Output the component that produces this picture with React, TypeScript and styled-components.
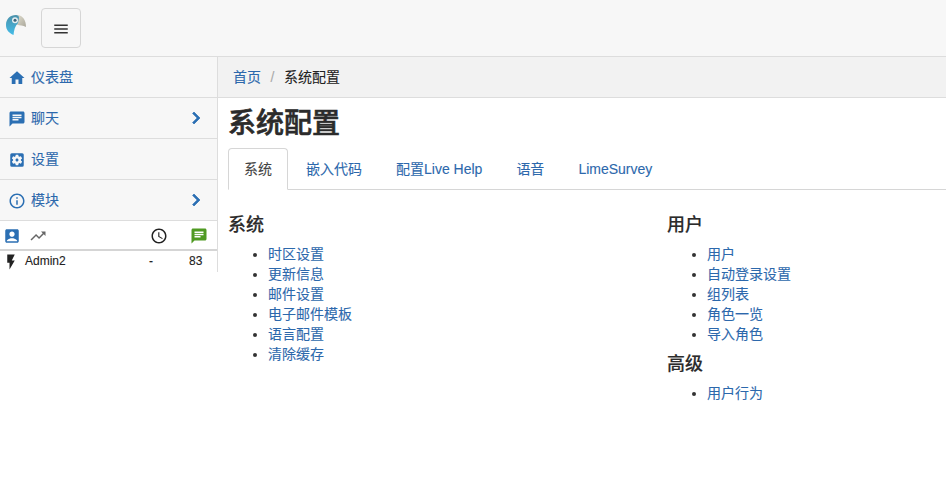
import React from "react";
import styled, { createGlobalStyle } from "styled-components";
import {
  MdAccessTime,
  MdAccountBox,
  MdChat,
  MdChevronRight,
  MdFlashOn,
  MdHome,
  MdInfoOutline,
  MdMenu,
  MdSettingsApplications,
  MdTrendingUp,
} from "react-icons/md";

const ICON = "#2b6fb3";
const LINE = "#dddddd";

const GlobalStyle = createGlobalStyle`
  *, *::before, *::after { box-sizing: border-box; }
  body {
    margin: 0;
    background: #fff;
    color: #333;
    font-family: "Liberation Sans", "Noto Sans CJK SC", sans-serif;
    font-size: 14px;
    line-height: 20px;
    -webkit-text-stroke: 0.1px;
  }
  a { color: #2c68ac; text-decoration: none; }
`;

const Page = styled.div`
  width: 100%;
  min-height: 496px;
  overflow: hidden;
`;

const TopBar = styled.header`
  display: flex;
  align-items: flex-start;
  height: 57px;
  padding: 8px 0 0 4px;
  background: #f7f7f7;
  border-bottom: 1px solid ${LINE};
`;

const Logo = styled.svg`
  width: 24px;
  height: 22px;
  margin: 6px 13px 0 0;
`;

const MenuButton = styled.button`
  display: flex;
  align-items: center;
  justify-content: center;
  width: 40px;
  height: 40px;
  padding: 2px 0 0;
  border: 1px solid #d6d6d6;
  border-radius: 4px;
  background: transparent;
  color: #333;
`;

const Columns = styled.div`
  display: flex;
  align-items: flex-start;
`;

const Sidebar = styled.aside`
  flex: none;
  width: 218px;
  height: 215px;
  border-right: 1px solid ${LINE};
`;

const NavItem = styled.a`
  display: flex;
  align-items: center;
  height: 41px;
  padding: 0 9px 0 8px;
  background: #f7f7f7;
  border-bottom: 1px solid ${LINE};
`;

const NavIcon = styled.span`
  display: flex;
  width: 18px;
  margin: 2px 5px 0 0;
  color: ${ICON};
`;

const NavLabel = styled.span`
  flex: 1;
`;

const Arrow = styled(MdChevronRight)`
  flex: none;
  color: ${ICON};
  path:last-child {
    stroke: ${ICON};
    stroke-width: 0.7;
  }
`;

const StatRow = styled.div<{ $head?: boolean }>`
  display: grid;
  grid-template-columns: 21px 120px 40px 1fr;
  align-items: center;
  height: ${(p) => (p.$head ? "30px" : "19px")};
  padding-left: 4px;
  border-bottom: ${(p) => (p.$head ? "2px solid #d5d5d5" : "0")};
  font-size: 12px;
  color: #000;
`;

const StatCell = styled.span<{ $color?: string; $shift?: number; $drop?: number }>`
  display: flex;
  margin-left: ${(p) => p.$shift ?? 0}px;
  margin-top: ${(p) => p.$drop ?? 0}px;
  color: ${(p) => p.$color ?? "#222"};
`;

const Main = styled.main`
  flex: 1;
  min-width: 0;
`;

const Breadcrumb = styled.nav`
  display: flex;
  align-items: center;
  height: 41px;
  padding-left: 15px;
  background: #f2f2f2;
  border-bottom: 1px solid ${LINE};
  color: #222;
`;

const Slash = styled.span`
  width: 23px;
  text-align: center;
  color: #aaa;
`;

const Title = styled.h1`
  height: 50px;
  margin: 0;
  padding: 1px 0 0 10px;
  font-size: 28px;
  font-weight: 500;
  line-height: 50px;
  color: #2b2b2b;
  -webkit-text-stroke: 0.6px;
`;

const Tabs = styled.div`
  display: flex;
  gap: 2px;
  height: 42px;
  margin-left: 10px;
  border-bottom: 1px solid #d6d6d6;
`;

const Tab = styled.a<{ $active?: boolean }>`
  height: 42px;
  padding: 10px 15px;
  border: 1px solid ${(p) => (p.$active ? "#d6d6d6" : "transparent")};
  border-bottom-color: ${(p) => (p.$active ? "#fff" : "transparent")};
  border-radius: 4px 4px 0 0;
  ${(p) => p.$active && "color: #444;"}
`;

const Panel = styled.section`
  display: grid;
  grid-template-columns: 439px 1fr;
  padding: 25px 0 0 10px;
`;

const Heading = styled.h2`
  margin: 0 0 9px;
  font-size: 18px;
  font-weight: 500;
  line-height: 20px;
  color: #2b2b2b;
  -webkit-text-stroke: 0.15px;
`;

const List = styled.ul`
  margin: 0 0 10px;
  padding-left: 40px;
`;

const menu = [
  { label: "仪表盘", icon: <MdHome size={18} /> },
  { label: "聊天", icon: <MdChat size={18} />, arrow: true },
  { label: "设置", icon: <MdSettingsApplications size={18} /> },
  { label: "模块", icon: <MdInfoOutline size={18} />, arrow: true },
];

const tabs = ["系统", "嵌入代码", "配置Live Help", "语音", "LimeSurvey"];

const columns = [
  [
    {
      title: "系统",
      items: ["时区设置", "更新信息", "邮件设置", "电子邮件模板", "语言配置", "清除缓存"],
    },
  ],
  [
    { title: "用户", items: ["用户", "自动登录设置", "组列表", "角色一览", "导入角色"] },
    { title: "高级", items: ["用户行为"] },
  ],
];

function ParrotLogo() {
  return (
    <Logo viewBox="0 0 24 22">
      <defs>
        <linearGradient id="feathers" x1="0" y1="0" x2="0" y2="1">
          <stop offset="0" stopColor="#4b91aa" />
          <stop offset="1" stopColor="#43bce8" />
        </linearGradient>
        <linearGradient id="beak" x1="0" y1="0" x2="1" y2="1">
          <stop offset="0" stopColor="#e2dfd0" />
          <stop offset="1" stopColor="#aaa79b" />
        </linearGradient>
      </defs>
      <path d="M14 1C19 2 22 6 22 13C19 11 16 12 12.500 10.500Z" fill="url(#beak)" />
      <path
        d="M2 11C2 5 6 1 12 1C14 1 15 2 15 4L14 9C11 12 10 16 9.500 21C5 19 2 16 2 11Z"
        fill="url(#feathers)"
      />
      <circle cx="11" cy="6.300" r="3" fill="#e5edf0" />
      <circle cx="11" cy="6.300" r="1.500" fill="#3c6479" />
    </Logo>
  );
}

export default function App() {
  return (
    <Page>
      <GlobalStyle />
      <TopBar>
        <ParrotLogo />
        <MenuButton aria-label="menu">
          <MdMenu size={18} />
        </MenuButton>
      </TopBar>
      <Columns>
        <Sidebar>
          {menu.map((m) => (
            <NavItem key={m.label} href="#">
              <NavIcon>{m.icon}</NavIcon>
              <NavLabel>{m.label}</NavLabel>
              {m.arrow && <Arrow size={24} strokeWidth={0} />}
            </NavItem>
          ))}
          <StatRow $head>
            <StatCell $color={ICON} $shift={-1} $drop={2}><MdAccountBox size={18} /></StatCell>
            <StatCell $color="#666" $shift={4} $drop={2}><MdTrendingUp size={18} /></StatCell>
            <StatCell $shift={5} $drop={2}><MdAccessTime size={18} /></StatCell>
            <StatCell $shift={5} $drop={2} $color="#4f9a22"><MdChat size={18} /></StatCell>
          </StatRow>
          <StatRow>
            <StatCell $shift={-2} $drop={2}><MdFlashOn size={18} /></StatCell>
            <StatCell>Admin2</StatCell>
            <StatCell $shift={4}>-</StatCell>
            <StatCell $shift={4}>83</StatCell>
          </StatRow>
        </Sidebar>
        <Main>
          <Breadcrumb>
            <a href="#">首页</a>
            <Slash>/</Slash>
            <span>系统配置</span>
          </Breadcrumb>
          <Title>系统配置</Title>
          <Tabs>
            {tabs.map((t, i) => (
              <Tab key={t} href="#" $active={i === 0}>{t}</Tab>
            ))}
          </Tabs>
          <Panel>
            {columns.map((groups, i) => (
              <div key={i}>
                {groups.map((g) => (
                  <React.Fragment key={g.title}>
                    <Heading>{g.title}</Heading>
                    <List>
                      {g.items.map((item) => (
                        <li key={item}><a href="#">{item}</a></li>
                      ))}
                    </List>
                  </React.Fragment>
                ))}
              </div>
            ))}
          </Panel>
        </Main>
      </Columns>
    </Page>
  );
}
